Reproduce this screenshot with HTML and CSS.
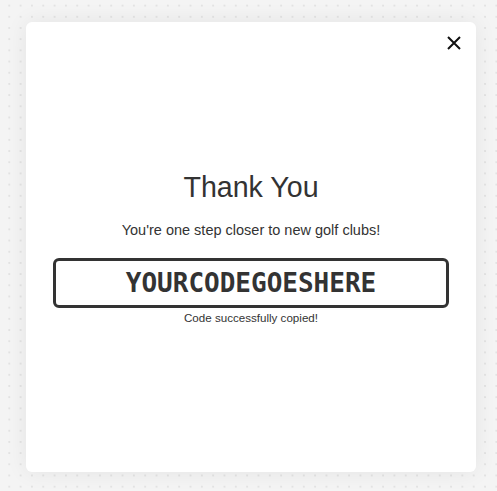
FILE: index.html
```html
<!DOCTYPE html>
<html>
<head>
<meta charset="utf-8">
<link rel="stylesheet" href="styles.css">
</head>
<body>
<div class="page">
  <div class="card">
    <button class="close" aria-label="Close">
      <svg width="16" height="16" viewBox="0 0 16 16"><path d="M2 2 L14 14 M14 2 L2 14" stroke="#111" stroke-width="2" fill="none"/></svg>
    </button>
    <div class="content">
      <h1 class="title">Thank You</h1>
      <p class="subtitle">You're one step closer to new golf clubs!</p>
      <div class="code">YOURCODEGOESHERE</div>
      <p class="note">Code successfully copied!</p>
    </div>
  </div>
</div>
</body>
</html>
```

FILE: styles.css
```css
html, body {
  margin: 0;
  padding: 0;
  width: 497px;
  height: 491px;
  overflow: hidden;
}
body {
  background-color: #f4f4f4;
  background-image: radial-gradient(circle, #e0e0e0 0.6px, transparent 1px);
  background-size: 11.33px 11.2px;
  background-position: 3.6px 0px;
  font-family: "Liberation Sans", Arial, sans-serif;
}
.page {
  padding: 22px 0 0 26px;
}
.card {
  position: relative;
  width: 450px;
  height: 450px;
  background: #fff;
  border-radius: 6px;
  box-shadow: 0 0 22px rgba(0, 0, 0, 0.07);
  display: flex;
  align-items: center;
  justify-content: center;
}
.close {
  position: absolute;
  top: 6px;
  right: 7px;
  width: 30px;
  height: 30px;
  padding: 0;
  border: 0;
  background: transparent;
  display: flex;
  align-items: center;
  justify-content: center;
}
.content {
  width: 396px;
  display: flex;
  flex-direction: column;
  align-items: center;
  margin-top: 2px;
}
.title {
  margin: 0;
  font-weight: normal;
  font-size: 28.6px;
  line-height: 32px;
  color: #333;
}
.subtitle {
  margin: 18px 0 0;
  font-size: 14.5px;
  line-height: 18px;
  color: #333;
}
.code {
  margin-top: 19px;
  box-sizing: border-box;
  width: 396px;
  height: 50px;
  border: 3px solid #333;
  border-radius: 6px;
  display: flex;
  align-items: center;
  justify-content: center;
  font-family: "DejaVu Sans Mono", monospace;
  font-weight: bold;
  font-size: 26px;
  color: #333;
}
.note {
  margin: 2px 0 0;
  font-size: 11.6px;
  line-height: 15px;
  color: #333;
}
```
